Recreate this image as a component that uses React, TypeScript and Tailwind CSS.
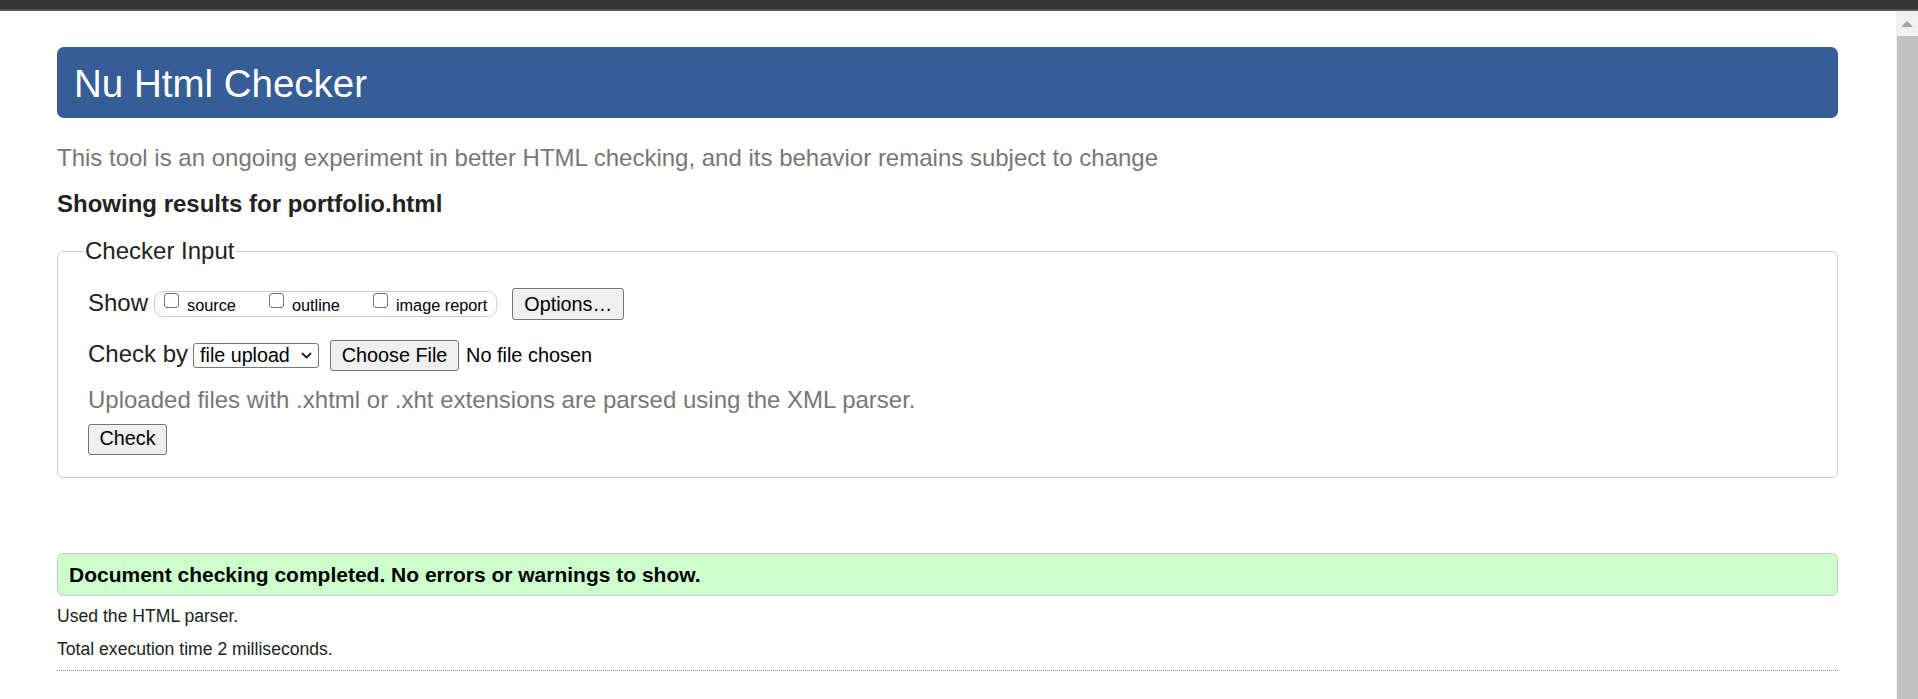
import React from 'react';

const FONT = { fontFamily: '"Liberation Sans", Arial, Helvetica, sans-serif' };

const OPTIONS = ['source', 'outline', 'image report'];

function Box({ first }: { first?: boolean }) {
  return (
    <span
      className={`inline-block w-[15px] h-[15px] mb-[3px] bg-white border border-[#767676] rounded-[3px] ${first ? '' : 'ml-[33px]'}`}
    />
  );
}

function Btn({ children, w, h }: { children: React.ReactNode; w: string; h: string }) {
  return (
    <button
      type="button"
      className={`inline-flex items-center justify-center ${w} ${h} bg-[#efefef] border border-[#767676] rounded-[3px] text-[19.8px] text-black`}
    >
      {children}
    </button>
  );
}

export default function App() {
  return (
    <div className="h-[699px] w-full overflow-hidden bg-white flex flex-col" style={FONT}>
      {/* browser chrome edge */}
      <div className="h-[9px] bg-[#333333] shrink-0" />
      <div className="h-[2px] bg-[#595959] shrink-0" />

      <div className="flex flex-1 min-h-0">
        <div className="flex-1 min-w-0 pl-[57px] pr-[58px] text-[#222]">
          {/* header */}
          <div className="mt-[36px] h-[71px] pt-[2px] rounded-[7px] bg-[#365d95] text-white flex items-center px-[17px]">
            <h1 className="text-[38.5px] leading-normal font-normal">Nu Html Checker</h1>
          </div>

          <p className="mt-[26px] text-[24px] leading-[28px] text-[#777]">
            This tool is an ongoing experiment in better HTML checking, and its behavior remains subject to change
          </p>
          <p className="mt-[18px] text-[24px] leading-[28px] font-bold">Showing results for portfolio.html</p>

          {/* checker input */}
          <fieldset className="mt-[19px] border border-[#cccccc] rounded-[6px] pl-[30px] pr-[30px] pt-[19.5px] pb-[22.5px]">
            <legend className="text-[24px] leading-[28px] ml-[-4px] px-[1px]">Checker Input</legend>

            <div className="flex items-baseline h-[32px]">
              <span className="text-[24px]">Show</span>
              <span className="ml-[6px] inline-block h-[26px] border border-[#cccccc] rounded-[9px] pl-[9px] pr-[9px] text-[16.3px] leading-[27px] text-black whitespace-nowrap">
                {OPTIONS.map((o, i) => (
                  <React.Fragment key={o}>
                    <Box first={i === 0} />
                    <span className="ml-[8px]">{o}</span>
                  </React.Fragment>
                ))}
              </span>
              <span className="ml-[15px]">
                <Btn w="w-[112px]" h="h-[32px]">Options…</Btn>
              </span>
            </div>

            <div className="mt-[19px] flex items-baseline">
              <span className="text-[24px]">Check by</span>
              <div className="ml-[5px] inline-flex items-center justify-between w-[126px] h-[25px] border border-[#767676] rounded-[3px] bg-white pl-[6px] pr-[6px] text-[19.7px] text-black">
                <span>file upload</span>
                <svg width="11" height="7" viewBox="0 0 11 7" fill="none">
                  <path d="M1 1.2 L5.5 5.5 L10 1.2" stroke="#111" strokeWidth="1.8" />
                </svg>
              </div>
              <span className="ml-[11px]">
                <Btn w="w-[129px]" h="h-[31px]">Choose File</Btn>
              </span>
              <span className="ml-[7px] text-[19.9px] text-black">No file chosen</span>
            </div>

            <p className="mt-[14px] text-[24px] leading-[28px] text-[#777]">
              Uploaded files with .xhtml or .xht extensions are parsed using the XML parser.
            </p>

            <div className="mt-[10px]">
              <Btn w="w-[79px]" h="h-[31px]">Check</Btn>
            </div>
          </fieldset>

          {/* result */}
          <div className="mt-[75px] h-[43px] flex items-center border border-[#c8c8c8] rounded-[6px] bg-[#ccffcc] pl-[11px]">
            <span className="text-[21px] font-bold text-black">Document checking completed. No errors or warnings to show.</span>
          </div>

          <p className="mt-[10.3px] text-[17.6px] leading-[20px]">Used the HTML parser.</p>
          <p className="mt-[12.7px] text-[17.6px] leading-[20px]">Total execution time 2 milliseconds.</p>
          <div className="mt-[11.3px] border-t border-dotted border-[#8a8a8a]" />
        </div>

        {/* scrollbar */}
        <div className="w-[22px] shrink-0 bg-[#f1f1f1] flex flex-col">
          <div className="h-[25px] flex items-center justify-center">
            <svg width="12" height="6" viewBox="0 0 12 6">
              <polygon points="0,6 6,0 12,6" fill="#a3a3a3" />
            </svg>
          </div>
          <div className="flex-1 ml-[1px] bg-[#c1c1c1]" />
        </div>
      </div>
    </div>
  );
}
